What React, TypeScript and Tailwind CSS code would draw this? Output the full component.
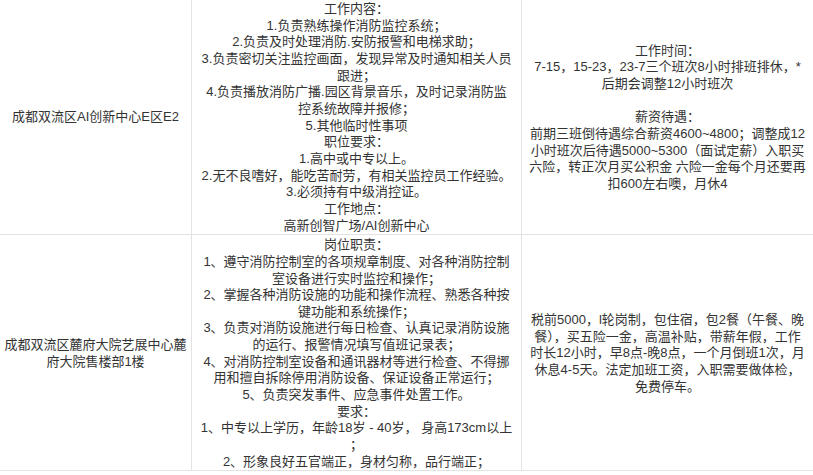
const rows = [
  {
    place: ['成都双流区AI创新中心E区E2'],
    duty: [
      '工作内容：',
      '1.负责熟练操作消防监控系统；',
      '2.负责及时处理消防.安防报警和电梯求助；',
      '3.负责密切关注监控画面，发现异常及时通知相关人员',
      '跟进；',
      '4.负责播放消防广播.园区背景音乐，及时记录消防监',
      '控系统故障并报修；',
      '5.其他临时性事项',
      '职位要求：',
      '1.高中或中专以上。',
      '2.无不良嗜好，能吃苦耐劳，有相关监控员工作经验。',
      '3.必须持有中级消控证。',
      '工作地点：',
      '高新创智广场/AI创新中心',
    ],
    pay: [
      '工作时间：',
      '7-15，15-23，23-7三个班次8小时排班排休，*',
      '后期会调整12小时班次',
      '',
      '薪资待遇：',
      '前期三班倒待遇综合薪资4600~4800；调整成12',
      '小时班次后待遇5000~5300（面试定薪）入职买',
      '六险，转正次月买公积金 六险一金每个月还要再',
      '扣600左右噢，月休4',
    ],
  },
  {
    place: ['成都双流区麓府大院艺展中心麓', '府大院售楼部1楼'],
    duty: [
      '岗位职责：',
      '1、遵守消防控制室的各项规章制度、对各种消防控制',
      '室设备进行实时监控和操作；',
      '2、掌握各种消防设施的功能和操作流程、熟悉各种按',
      '键功能和系统操作；',
      '3、负责对消防设施进行每日检查、认真记录消防设施',
      '的运行、报警情况填写值班记录表；',
      '4、对消防控制室设备和通讯器材等进行检查、不得挪',
      '用和擅自拆除停用消防设备、保证设备正常运行；',
      '5、负责突发事件、应急事件处置工作。',
      '要求：',
      '1、中专以上学历，年龄18岁 - 40岁， 身高173cm以上',
      '；',
      '2、形象良好五官端正，身材匀称，品行端正；',
    ],
    pay: [
      '税前5000，l轮岗制，包住宿，包2餐（午餐、晚',
      '餐），买五险一金，高温补贴，带薪年假，工作',
      '时长12小时，早8点-晚8点，一个月倒班1次，月',
      '休息4-5天。法定加班工资，入职需要做体检，',
      '免费停车。',
    ],
  },
];

const Lines = ({ lines }: { lines: string[] }) => (
  <div>
    {lines.map((line, i) => (
      <div key={i} className="whitespace-pre">
        {line || '\u00a0'}
      </div>
    ))}
  </div>
);

const App = () => {
  return (
    <div className="w-full h-[475px] overflow-hidden bg-white">
      <div className="-mt-px grid grid-cols-[192px_330px_1fr] text-center text-[13px] leading-[16.65px] text-[#333333] font-['Liberation_Sans','Noto_Sans_CJK_SC',sans-serif]">
        {rows.map((row, index) => (
          <div key={index} className="contents">
            <div className="flex items-center justify-center border-r border-b border-[#e3e3e3] px-[3px] pt-[2px]">
              <Lines lines={row.place} />
            </div>
            <div className="border-r border-b border-[#e3e3e3] px-[3px] pt-[2px]">
              <Lines lines={row.duty} />
            </div>
            <div className="flex items-center justify-center border-b border-[#e3e3e3] px-[3px] pt-[2px]">
              <Lines lines={row.pay} />
            </div>
          </div>
        ))}
      </div>
    </div>
  );
};

export default App;
